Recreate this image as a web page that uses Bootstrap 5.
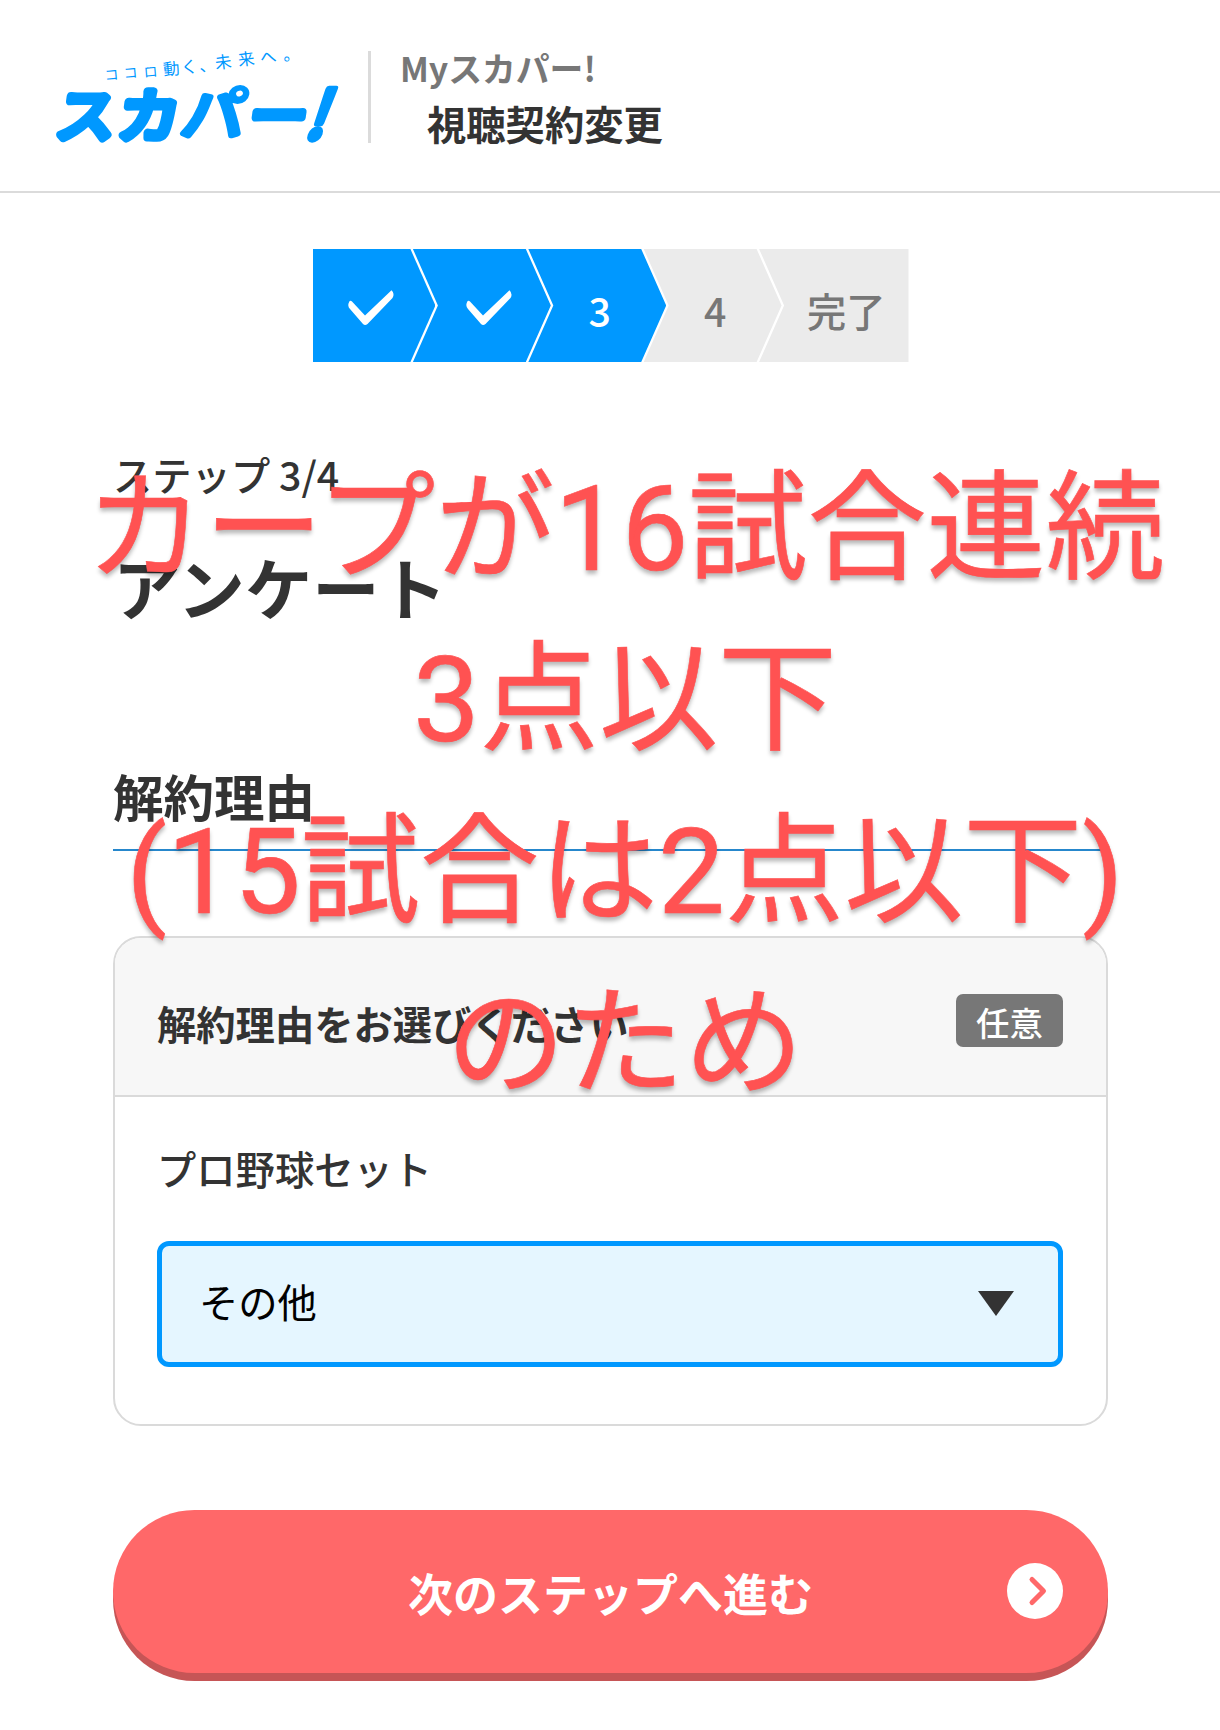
<!DOCTYPE html>
<html lang="ja">
<head>
<meta charset="utf-8">
<meta name="viewport" content="width=device-width, initial-scale=1">
<title>Myスカパー! 視聴契約変更</title>
<link href="https://cdn.jsdelivr.net/npm/bootstrap@5.3.0/dist/css/bootstrap.min.css" rel="stylesheet">
<style>
body{font-family:"Noto Sans CJK JP",sans-serif;color:#333;background:#fff;font-size:39.3px;line-height:56px;overflow:hidden}
.page{width:1220px;height:1730px;overflow:hidden}
.site-head{height:193px;border-bottom:2px solid #dbdbdb;padding-left:50px}
.logo{width:300px;height:150px;flex:none}
.head-rule{width:3px;height:92px;margin:51px 30px 0 18px;background:#dbdbdb}
.head-text{padding-top:40px}
.brand-line{font-size:33.8px;line-height:55px;color:#777;font-weight:700;margin-left:-1px}
.title-line{font-weight:700;padding-left:26px}
.main-col{padding:56px 112px 0 113px}
.stepper{width:596px;height:113px}
.stp{width:138px;margin-left:-22.5px;background:#ebebeb;color:#777;font-weight:500;padding:8px 0 0 5px;clip-path:polygon(0 0,calc(100% - 25px) 0,100% 50%,calc(100% - 25px) 100%,0 100%,25px 50%)}
.stp.on{background:#0098ff;color:#fff}
.stp:first-child{width:123px;margin-left:0;padding:5px 5px 0 0;clip-path:polygon(0 0,calc(100% - 25px) 0,100% 50%,calc(100% - 25px) 100%,0 100%)}
.stp:nth-child(2){padding:5px 0 0 14px}
.stp:last-child{width:149.5px;padding:9px 0 0 25px;clip-path:polygon(0 0,100% 0,100% 100%,0 100%,25px 50%)}
.step-no{margin-top:84px;font-weight:500}
.page-title{margin:37px 0 0;font-size:67.3px;line-height:94px;font-weight:700}
.sec-title{margin:126px 0 0;height:92px;font-size:50.5px;line-height:72px;font-weight:700;border-bottom:2px solid #2687cc}
.q-card{margin-top:85px;border:2px solid #dadada;border-radius:28px;height:490px;overflow:hidden}
.q-card .card-header{height:159px;background:#f7f7f7;border-bottom:2px solid #dadada;padding:57px 43px 0 42px;font-weight:700}
.opt{width:107px;height:53px;border-radius:7px;background:#777;color:#fff;font-size:33.4px;font-weight:500;line-height:56px;margin-top:-1px}
.q-card .card-body{padding:43px 43px 0 42px}
.q-card label{font-weight:500}
.pick{margin-top:45px;height:126px;border:5px solid #0098ff;border-radius:12px;background:#e5f6ff;color:#000;padding:0 44px 0 37px}
.pick span{padding-bottom:6px}
.pick svg{margin-bottom:1px}
.go{margin-top:84px;height:163px;border:0;border-radius:82px;background:#ff6869;box-shadow:0 8px 0 #c65556;color:#fff;font-size:45px;font-weight:700;padding:3px 0 0}
.go:hover{background:#ff6869;color:#fff}
.go svg{right:45px;top:53px}
.caption-over{left:0;right:0;top:443.5px;padding-left:30px;font-family:Roboto,"Noto Sans CJK JP",sans-serif;font-size:119.1px;line-height:171.8px;color:#ff5252;-webkit-text-stroke:.6px #ff5252;text-shadow:0 4px 4px rgba(0,0,0,.28);white-space:nowrap;pointer-events:none}
</style>
<script src="https://cdn.jsdelivr.net/npm/bootstrap@5.3.0/dist/js/bootstrap.bundle.min.js"></script>
</head>
<body>
<div class="page position-relative">
  <header class="site-head d-flex align-items-start">
    <svg class="logo" viewBox="50 0 300 150" fill="#0098ff" font-family="'Noto Sans CJK JP',sans-serif" role="img" aria-label="スカパー!">
      <g font-size="16.5" font-weight="400" text-anchor="middle">
        <text transform="translate(112 80) rotate(-5) scale(.85)">コ</text>
        <text transform="translate(131 78) rotate(-5) scale(.85)">コ</text>
        <text transform="translate(151 77) rotate(-5) scale(.85)">ロ</text>
        <text transform="translate(172 75) rotate(-6)">動</text>
        <text transform="translate(190 73) rotate(-6)">く</text>
        <text transform="translate(208 71) rotate(-6)">、</text>
        <text transform="translate(224 68) rotate(-7)">未</text>
        <text transform="translate(247 65) rotate(-7)">来</text>
        <text transform="translate(269 63) rotate(-7)">へ</text>
        <text transform="translate(292 60) rotate(-7)">。</text>
      </g>
      <g font-size="58" font-weight="400" stroke="#0098ff" stroke-width="8" stroke-linejoin="round" stroke-linecap="round">
        <text transform="translate(54 137) skewX(-8) scale(1.02 1)">ス</text>
        <text transform="translate(116 137) skewX(-8) scale(1.05 1)">カ</text>
        <text transform="translate(179 135) skewX(-8) scale(1.1 1)" stroke-width="6">パ</text>
        <text transform="translate(247 137) skewX(-8)">ー</text>
        <text transform="translate(303 139) skewX(-20) scale(1.05 1.15)" font-weight="500" stroke-width="5">!</text>
      </g>
      <ellipse cx="239.500" cy="93.500" rx="3.500" ry="2.800" fill="#fff" transform="rotate(-25 239.500 93.500)"/>
    </svg>
    <div class="head-rule"></div>
    <div class="head-text">
      <div class="brand-line">Myスカパー!</div>
      <div class="title-line">視聴契約変更</div>
    </div>
  </header>

  <main class="main-col">
    <div class="stepper d-flex mx-auto">
      <div class="stp on d-flex align-items-center justify-content-center"><svg width="48" height="38" viewBox="0 0 48 38"><path d="M2.300 12.500Q0 17 3 20L16 35Q18 37 20.500 35L45.500 9Q48 5 44.500 1.300L18 26.500 5 12.500Q3.500 11 2.300 12.500Z" fill="#fff"/></svg></div>
      <div class="stp on d-flex align-items-center justify-content-center"><svg width="48" height="38" viewBox="0 0 48 38"><path d="M2.300 12.500Q0 17 3 20L16 35Q18 37 20.500 35L45.500 9Q48 5 44.500 1.300L18 26.500 5 12.500Q3.500 11 2.300 12.500Z" fill="#fff"/></svg></div>
      <div class="stp on d-flex align-items-center justify-content-center">3</div>
      <div class="stp d-flex align-items-center justify-content-center">4</div>
      <div class="stp d-flex align-items-center justify-content-center">完了</div>
    </div>
    <div class="step-no">ステップ 3/4</div>
    <h1 class="page-title">アンケート</h1>
    <h2 class="sec-title">解約理由</h2>
    <section class="card q-card">
      <div class="card-header d-flex justify-content-between align-items-start">
        <span>解約理由をお選びください</span>
        <span class="opt text-center">任意</span>
      </div>
      <div class="card-body">
        <label class="d-block">プロ野球セット</label>
        <div class="pick d-flex align-items-center justify-content-between">
          <span>その他</span>
          <svg width="36" height="25" viewBox="0 0 36 25"><path d="M0 0H36L18 25Z" fill="#333"/></svg>
        </div>
      </div>
    </section>
    <button type="button" class="go btn w-100 position-relative">次のステップへ進む
      <svg class="position-absolute" width="56" height="56" viewBox="0 0 56 56"><circle cx="28" cy="28" r="28" fill="#fff"/><path d="M25 16.5 36.5 28 25 39.5" fill="none" stroke="#ff6869" stroke-width="5" stroke-linecap="round" stroke-linejoin="round"/></svg>
    </button>
  </main>

  <div class="caption-over position-absolute text-center">カープが16試合連続<br>3点以下<br>(15試合は2点以下)<br>のため</div>
</div>
</body>
</html>
